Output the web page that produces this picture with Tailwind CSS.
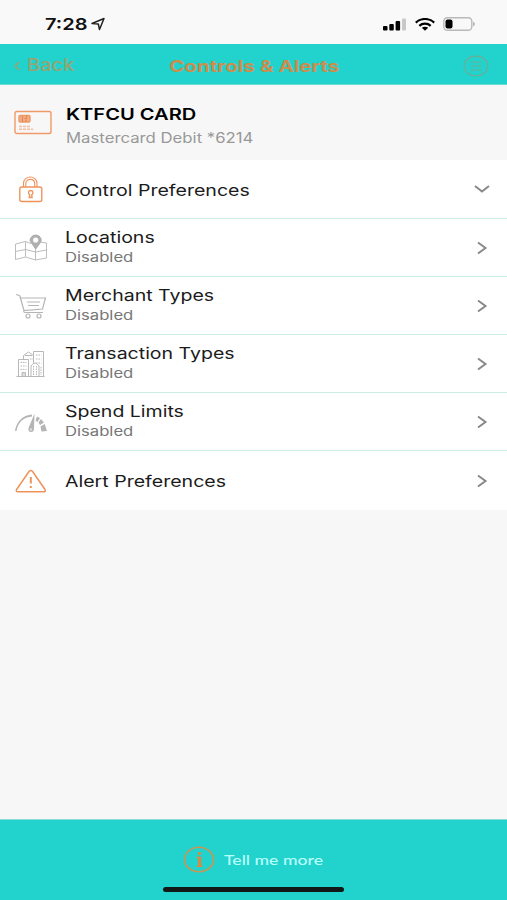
<!DOCTYPE html>
<html lang="en">
<head>
  <meta charset="UTF-8">
  <title>Controls &amp; Alerts</title>
  <meta name="viewport" content="width=device-width,initial-scale=1"/>
  <script src="https://cdn.jsdelivr.net/npm/@tailwindcss/browser@4"></script>
</head>
<body class="h-[900px] flex flex-col overflow-hidden bg-[#f7f7f7] font-['Inter','Liberation_Sans',sans-serif] text-[#111] whitespace-nowrap">
  <!-- Status bar -->
  <div class="h-11 shrink-0 flex items-center pl-[45px] pr-[32px] pt-1 bg-[#f9f9f9]">
    <span class="w-[46px] text-base font-semibold origin-left scale-x-[1.25]">7:28</span>
    <svg width="14" height="14" viewBox="0 0 14 14" fill="none" stroke="#222" stroke-width="1.5" stroke-linejoin="round"><path d="M1 6.500 13 1.500 8.500 12.500 7.300 7Z"/></svg>
    <div class="ml-auto flex items-center gap-2">
      <svg width="24" height="13" viewBox="0 0 24 13"><rect x="0" y="8" width="4.500" height="4.500" rx="1"/><rect x="6.300" y="6" width="4.500" height="6.500" rx="1"/><rect x="12.600" y="3" width="4.500" height="9.500" rx="1"/><rect x="19" y=".5" width="4" height="12" rx="1" fill="#c8c8c8"/></svg>
      <svg width="20" height="13" viewBox="0 0 20 13" fill="none" stroke="#000" stroke-width="2.200"><path d="M.8 4.600C6-.2 14-.2 19.200 4.600M4.300 7.800C7.500 5 12.500 5 15.700 7.800"/><path d="M6.800 9.800Q10 7.800 13.200 9.800L10 12.800Z" fill="#000" stroke="none"/></svg>
      <svg width="32" height="14" viewBox="0 0 32 14"><rect x=".8" y=".8" width="28" height="12.400" rx="3.500" fill="none" stroke="#b9b9b9" stroke-width="1.400"/><rect x="2.500" y="2.500" width="7" height="9" rx="2"/><path d="M30 4.500Q34 7 30 9.500Z" fill="#b9b9b9"/></svg>
    </div>
  </div>

  <!-- Nav bar -->
  <header class="h-[41px] shrink-0 grid grid-cols-[160px_1fr_160px] items-center pt-[3px] border-b border-[#6fdcd5] bg-[#22d2cd] text-[#cf8d4c]">
    <div class="flex items-center gap-[7px] pl-[14px] text-[#96a471]">
      <svg width="6" height="10" viewBox="0 0 6 10" fill="none" stroke="currentColor" stroke-width="1.600"><path d="M5.200 1 1.200 5 5.200 9"/></svg>
      <span class="text-[17px] font-medium origin-left scale-x-[1.18]">Back</span>
    </div>
    <h1 class="pl-[1px] text-center text-base font-bold"><span class="inline-block scale-x-[1.285]">Controls &amp; Alerts</span></h1>
    <svg class="ml-auto mr-[18px]" width="26" height="22" viewBox="0 0 26 22" fill="none" stroke="#6cae94" stroke-width="1.200"><ellipse cx="13" cy="11" rx="11.800" ry="9.800"/><path d="M7.500 7h11M7.500 11h11M7.500 15h11"/></svg>
  </header>

  <!-- Card -->
  <section class="h-[75px] shrink-0 flex items-center pl-[14px]">
    <svg class="mr-[14px]" width="38" height="25" viewBox="0 0 38 25" fill="none" stroke="#f09a67" stroke-width="1.400"><rect x="1" y="1.500" width="36" height="22" rx="1.800"/><rect x="5" y="5.500" width="11" height="6.500" rx="1" fill="#f3ac80"/><path d="M8.500 6v6M12.500 5.500v3h-2M12 12v-2.500" stroke="#d98552" stroke-width=".9"/><path d="M5 16.500h12M5 19.300h14" stroke="#f4bd9b" stroke-dasharray="3 1"/></svg>
    <div class="pt-[7px]">
      <div class="text-base leading-6 font-semibold text-black origin-left scale-x-[1.255]">KTFCU CARD</div>
      <div class="text-sm leading-6 text-[#999] origin-left scale-x-[1.195]">Mastercard Debit *6214</div>
    </div>
  </section>

  <!-- Preferences -->
  <main class="bg-white text-[#1b1b1b]">
    <div class="h-[59px] flex items-center pl-[14px] pr-[17px] border-b border-[#cdeee4]">
      <svg class="w-[34px] h-7 mr-[17px]" viewBox="0 0 34 28" fill="none" stroke="#ef935d" stroke-width="1.400"><rect x="5.800" y="12" width="22" height="14.500" rx="2"/><path d="M9.500 12V8.500C9.500-.2 23-.2 23 8.500V12M11.800 12V8.500C11.800 3 20.700 3 20.700 8.500V12" stroke-width="1.100"/><path d="M15.300 22.500 15.700 20C13.500 17.800 14.500 15.500 16.700 15.500S20 17.800 17.700 20L18.100 22.500Z"/></svg>
      <span class="pt-0.5 text-base origin-left scale-x-[1.222]">Control Preferences</span>
      <svg class="ml-auto" width="16" height="10" viewBox="0 0 16 10" fill="none" stroke="#888" stroke-width="2"><path d="M1 2 8 7.500 15 2"/></svg>
    </div>
    <div class="h-[58px] flex items-center pl-[14px] pr-[19px] border-b border-[#cdeee4]">
      <svg class="w-[34px] h-7 mr-[17px]" viewBox="0 0 34 28" fill="none" stroke="#bdbdbd" stroke-width="1"><path d="M17 9.500 11.500 7.500 1.500 10V25.500L11.500 23 21.500 26 32.500 24V9L26 8M11.500 7.500V23M21.500 15V26M1.500 17.500 11.500 15.500 21.500 18 32.500 16"/><path d="M21.700 15C17 8 15.500 7.500 16.300 5 18-.2 25.500-.2 27 5 27.700 7.500 26 9 21.700 15Z" fill="#b0b0b0" stroke="#aaa"/><circle cx="21.700" cy="6" r="2.600" fill="#fff" stroke="none"/></svg>
      <div class="pb-[2px]"><div class="text-base leading-5 origin-left scale-x-[1.22]">Locations</div><div class="text-[13px] leading-5 text-[#777] origin-left scale-x-[1.28]">Disabled</div></div>
      <svg class="ml-auto" width="12" height="14" viewBox="0 0 12 14" fill="none" stroke="#888" stroke-width="2"><path d="M2 1.500 9.500 7 2 12.500"/></svg>
    </div>
    <div class="h-[58px] flex items-center pl-[14px] pr-[19px] border-b border-[#cdeee4]">
      <svg class="w-[34px] h-7 mr-[17px]" viewBox="0 0 34 28" fill="none" stroke="#b5b5b5" stroke-width="1.200"><path d="M2 2.500 5.500 3.500 7 6H31.500L28.500 17 10 18.500 6 4.500M10 18.500Q9 20.500 11.500 20.500H29M13 10h13M14 13.500h11"/><circle cx="14" cy="24" r="2"/><circle cx="25" cy="24" r="2"/></svg>
      <div class="pb-[2px]"><div class="text-base leading-5 origin-left scale-x-[1.22]">Merchant Types</div><div class="text-[13px] leading-5 text-[#777] origin-left scale-x-[1.28]">Disabled</div></div>
      <svg class="ml-auto" width="12" height="14" viewBox="0 0 12 14" fill="none" stroke="#888" stroke-width="2"><path d="M2 1.500 9.500 7 2 12.500"/></svg>
    </div>
    <div class="h-[58px] flex items-center pl-[14px] pr-[19px] border-b border-[#cdeee4]">
      <svg class="w-[34px] h-7 mr-[17px]" viewBox="0 0 34 28" fill="none" stroke="#b8b8b8" stroke-width="1"><path d="M2.500 26.500h28M4.500 26.500V9.500h10v17M19.500 13V1.500h10v25M17 26.500V16Q21 10 25 16v10.500M9.500 9V5.500L14.500 2 19.500 5.500V12M11 5.500h7M14.500 9.500v17"/><path d="M6.500 12.500h6M6.500 16h6M6.500 19.500h6M22 5h5.500M22 9h5.500M22 13h5.500M16 9h3M27 17v8M19.500 16v10M22.500 16v10" stroke-dasharray="1.500 1"/><path d="M8 22.500h3.500v4H8z" fill="#ddd"/></svg>
      <div class="pb-[2px]"><div class="text-base leading-5 origin-left scale-x-[1.22]">Transaction Types</div><div class="text-[13px] leading-5 text-[#777] origin-left scale-x-[1.28]">Disabled</div></div>
      <svg class="ml-auto" width="12" height="14" viewBox="0 0 12 14" fill="none" stroke="#888" stroke-width="2"><path d="M2 1.500 9.500 7 2 12.500"/></svg>
    </div>
    <div class="h-[58px] flex items-center pl-[14px] pr-[19px] border-b border-[#cdeee4]">
      <svg class="w-[34px] h-7 mr-[17px]" viewBox="0 0 34 28" fill="#b5b5b5"><path d="M1 23C2 14 9 7 18 6.500V8.500C10 9 4 14 2.500 23Z"/><path d="M20.500 5.500 14.500 20Q14 24 17 24T20 20.500Z"/><path d="M23 8.500 26 10 23.500 14 21.500 12.500ZM27 11 30 14.500 26 17 24.500 14.500ZM30.700 16 33 23 27.500 23.500 26.500 18.500Z"/><circle cx="17" cy="21.500" r="1.200" fill="#ddd"/></svg>
      <div class="pb-[1px]"><div class="text-base leading-5 origin-left scale-x-[1.22]">Spend Limits</div><div class="text-[13px] leading-5 text-[#777] origin-left scale-x-[1.28]">Disabled</div></div>
      <svg class="ml-auto" width="12" height="14" viewBox="0 0 12 14" fill="none" stroke="#888" stroke-width="2"><path d="M2 1.500 9.500 7 2 12.500"/></svg>
    </div>
    <div class="h-[59px] flex items-center pl-[14px] pr-[19px]">
      <svg class="w-[34px] h-7 mr-[17px]" viewBox="0 0 34 28" fill="none" stroke="#ef935d" stroke-width="1.500" stroke-linejoin="round"><path d="M15 4.500Q16.800 2.500 18.600 4.500L31 22.500Q32 24.800 29.500 24.800H4Q1.500 24.800 2.600 22.500Z"/><path d="M16.800 10v6.500M16.800 19v2" stroke-width="2"/></svg>
      <span class="text-base origin-left scale-x-[1.222]">Alert Preferences</span>
      <svg class="ml-auto" width="12" height="14" viewBox="0 0 12 14" fill="none" stroke="#888" stroke-width="2"><path d="M2 1.500 9.500 7 2 12.500"/></svg>
    </div>
  </main>

  <!-- Footer -->
  <footer class="mt-auto h-[81px] shrink-0 flex flex-col border-t border-[#8bdcd8] bg-[#22d2cd]">
    <div class="mt-[26px] flex items-center pl-[183px]">
      <svg class="mr-[9px]" width="32" height="27" viewBox="0 0 32 27" fill="none" stroke="#c99655" stroke-width="1.600"><ellipse cx="16" cy="13.500" rx="14.500" ry="12.300"/><path d="M13.500 11.500h4V20M13.500 20.300h6M17.500 11.500V20" stroke="#d58a45"/><path d="M15.500 11v9h2v-9zM15.500 6.500h2v2h-2z" fill="#d58a45" stroke="#d58a45" stroke-width="1"/></svg>
      <span class="text-sm font-medium text-[#b9fffc] origin-left scale-x-[1.26] font-['Lato','Liberation_Sans',sans-serif]">Tell me more</span>
    </div>
    <div class="mt-[14px] mx-auto h-[5px] w-[181px] rounded-full bg-[#101918]"></div>
  </footer>
</body>
</html>
